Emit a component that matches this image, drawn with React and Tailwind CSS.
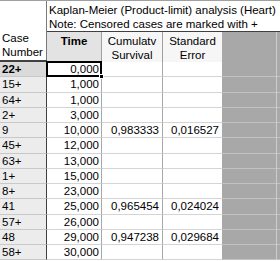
import React from 'react';

const rows = [
  { id: '22+', time: '0,000' },
  { id: '15+', time: '1,000' },
  { id: '64+', time: '1,000' },
  { id: '2+', time: '3,000' },
  { id: '9', time: '10,000', surv: '0,983333', err: '0,016527' },
  { id: '45+', time: '12,000' },
  { id: '63+', time: '13,000' },
  { id: '1+', time: '15,000' },
  { id: '8+', time: '23,000' },
  { id: '41', time: '25,000', surv: '0,965454', err: '0,024024' },
  { id: '57+', time: '26,000' },
  { id: '48', time: '29,000', surv: '0,947238', err: '0,029684' },
  { id: '58+', time: '30,000' },
];

const GrayTail = ({ line = true }) => (
  <div className="flex flex-1 h-full">
    <div className={`w-[54px] h-full bg-[#a8a8a8] ${line ? 'border-b border-[#c2c2c2]' : ''}`} />
    <div className="w-[1px] h-full bg-[#cdcdcd]" />
    <div className={`flex-1 h-full bg-[#a8a8a8] ${line ? 'border-b border-[#c2c2c2]' : ''}`} />
  </div>
);

export default function App() {
  return (
    <div
      className="w-[280px] h-[261px] overflow-hidden bg-white text-black text-[11.5px] leading-[14px] border-t border-[#a0a0a0]"
      style={{ fontFamily: '"Liberation Sans", Arial, sans-serif' }}
    >
      {/* top area: title + column headers */}
      <div className="flex h-[61px] border-b-2 border-[#404040]">
        <div className="w-[47px] shrink-0 border-r border-[#7a7a7a] flex flex-col justify-end pl-[2px] pb-[1px]">
          <div>Case</div>
          <div>Number</div>
        </div>
        <div className="flex-1 flex flex-col">
          <div className="h-[31px] border-b border-[#404040] pl-[2px] pt-[2px] whitespace-nowrap">
            <div>Kaplan-Meier (Product-limit) analysis (Heart)</div>
            <div>Note: Censored cases are marked with +</div>
          </div>
          <div className="flex-1 flex">
            <div className="w-[55px] shrink-0 bg-[#e3e3e3] border-r border-[#a0a0a0] text-center font-bold pt-[2px]">
              Time
            </div>
            <div className="w-[61px] shrink-0 bg-[#f6f6f6] border-r border-[#a0a0a0] text-center pt-[2px]">
              <div>Cumulatv</div>
              <div>Survival</div>
            </div>
            <div className="w-[59px] shrink-0 bg-[#f6f6f6] text-center pt-[2px]">
              <div>Standard</div>
              <div>Error</div>
            </div>
            <GrayTail line={false} />
          </div>
        </div>
      </div>

      {/* data rows */}
      <div className="relative">
        {rows.map((r, i) => (
          <div key={r.id} className="flex h-[15.25px]">
            <div
              className={`w-[47px] shrink-0 pl-[2px] border-r border-[#404040] border-b border-b-[#c8c8c8] flex items-center ${
                i === 0 ? 'bg-[#dadada] font-bold' : 'bg-[#ececec]'
              }`}
            >
              {r.id}
            </div>
            <div className="w-[55px] shrink-0 pr-[2px] border-r border-[#a8a8a8] border-b border-b-[#d4d4d4] flex items-center justify-end">
              {r.time}
            </div>
            <div className="w-[61px] shrink-0 pr-[3px] border-r border-[#a8a8a8] border-b border-b-[#d4d4d4] flex items-center justify-end">
              {r.surv || ''}
            </div>
            <div className="w-[59px] shrink-0 pr-[3px] border-b border-[#d4d4d4] flex items-center justify-end">
              {r.err || ''}
            </div>
            <GrayTail />
          </div>
        ))}

        {/* selected cell */}
        <div className="absolute left-[46px] top-[-1px] w-[56px] h-[16px] border-2 border-black pointer-events-none">
          <div className="absolute right-[-4px] bottom-[-4px] w-[5px] h-[5px] bg-black border border-white" />
        </div>
      </div>
    </div>
  );
}
